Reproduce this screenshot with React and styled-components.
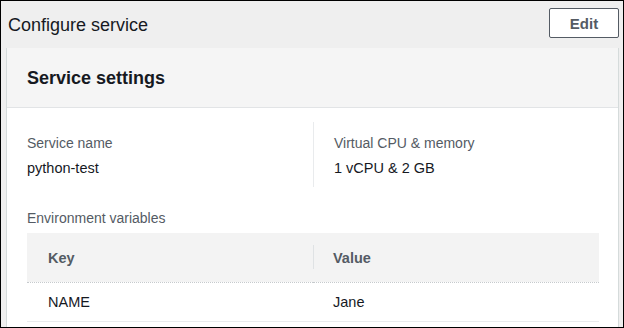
import React from "react";
import styled, { createGlobalStyle } from "styled-components";

const GlobalStyle = createGlobalStyle`
  html, body {
    margin: 0;
    padding: 0;
    background: #ffffff;
  }
  body {
    font-family: "Liberation Sans", Arial, sans-serif;
  }
`;

const Frame = styled.div`
  box-sizing: border-box;
  width: 624px;
  height: 328px;
  border: 1px solid #000;
  background: #efefef;
  overflow: hidden;
  display: flex;
  flex-direction: column;
`;

const TopBar = styled.div`
  height: 47px;
  flex-shrink: 0;
  display: flex;
  justify-content: space-between;
  align-items: flex-start;
  padding: 0 4px 0 7px;
`;

const PageTitle = styled.h1`
  margin: 0;
  font-size: 18px;
  font-weight: normal;
  line-height: 22px;
  padding-top: 13px;
  color: #16191f;
`;

const EditButton = styled.button`
  margin-top: 7px;
  width: 70px;
  height: 30px;
  box-sizing: border-box;
  border: 1px solid #545b64;
  border-radius: 2px;
  background: #fff;
  color: #545b64;
  font-family: "Liberation Sans", Arial, sans-serif;
  font-weight: bold;
  font-size: 15px;
  padding: 0;
`;

const Panel = styled.section`
  margin-left: 5px;
  width: 613px;
  box-sizing: border-box;
  flex: 1;
  border-left: 1px solid #d5dbdb;
  border-right: 1px solid #d5dbdb;
  background: #fff;
`;

const PanelHeader = styled.div`
  height: 60px;
  box-sizing: border-box;
  background: #f5f5f5;
  border-bottom: 1px solid #e2e4e6;
  padding-left: 20px;
  display: flex;
  align-items: center;
`;

const PanelTitle = styled.h2`
  margin: 0;
  font-size: 18px;
  font-weight: bold;
  color: #16191f;
  padding-top: 2px;
`;

const PanelBody = styled.div`
  padding: 14px 19px 0 20px;
`;

const Columns = styled.div`
  display: grid;
  grid-template-columns: 1fr 1fr;
  height: 65px;
`;

const Column = styled.div`
  padding-top: 11px;
  padding-left: ${(p) => (p.divided ? "20px" : "0")};
  border-left: ${(p) => (p.divided ? "1px solid #e9ebed" : "none")};
`;

const Label = styled.div`
  font-size: 14px;
  line-height: 20px;
  color: #545b64;
`;

const Value = styled.div`
  margin-top: 4px;
  font-size: 14.5px;
  line-height: 22px;
  color: #16191f;
`;

const SectionLabel = styled(Label)`
  margin-top: 21px;
`;

const Table = styled.table`
  margin-top: 5px;
  width: 100%;
  border-collapse: collapse;
  table-layout: fixed;
`;

const HeadCell = styled.th`
  position: relative;
  height: 49px;
  padding: 0 0 0 ${(p) => (p.first ? "21px" : "20px")};
  text-align: left;
  background: #f3f3f3;
  border-bottom: 1px dotted #c6cacd;
  font-size: 14.5px;
  font-weight: bold;
  color: #545b64;

  &::before {
    content: "";
    display: ${(p) => (p.first ? "none" : "block")};
    position: absolute;
    left: 0;
    top: 12px;
    height: 24px;
    border-left: 1px solid #dfe2e4;
  }
`;

const Cell = styled.td`
  height: 38px;
  padding: 0 0 0 ${(p) => (p.first ? "21px" : "20px")};
  border-bottom: 1px solid #e9ebed;
  font-size: 14.5px;
  color: #16191f;
`;

export default function App() {
  const env = [{ key: "NAME", value: "Jane" }];
  return (
    <>
      <GlobalStyle />
      <Frame>
        <TopBar>
          <PageTitle>Configure service</PageTitle>
          <EditButton>Edit</EditButton>
        </TopBar>
        <Panel>
          <PanelHeader>
            <PanelTitle>Service settings</PanelTitle>
          </PanelHeader>
          <PanelBody>
            <Columns>
              <Column>
                <Label>Service name</Label>
                <Value>python-test</Value>
              </Column>
              <Column divided>
                <Label>Virtual CPU &amp; memory</Label>
                <Value>1 vCPU &amp; 2 GB</Value>
              </Column>
            </Columns>
            <SectionLabel>Environment variables</SectionLabel>
            <Table>
              <thead>
                <tr>
                  <HeadCell first>Key</HeadCell>
                  <HeadCell>Value</HeadCell>
                </tr>
              </thead>
              <tbody>
                {env.map((row) => (
                  <tr key={row.key}>
                    <Cell first>{row.key}</Cell>
                    <Cell>{row.value}</Cell>
                  </tr>
                ))}
              </tbody>
            </Table>
          </PanelBody>
        </Panel>
      </Frame>
    </>
  );
}
